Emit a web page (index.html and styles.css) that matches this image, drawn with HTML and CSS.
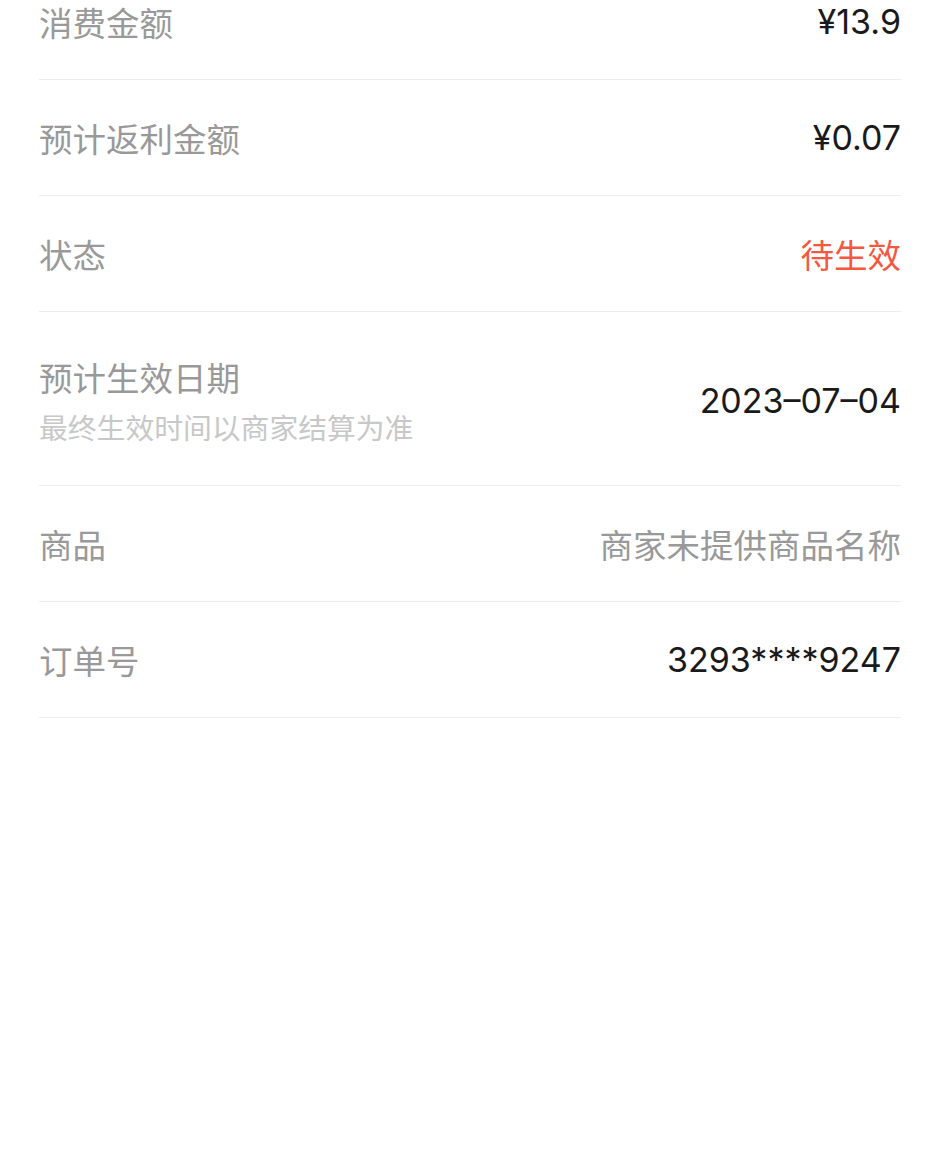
FILE: index.html
```html
<!DOCTYPE html>
<html lang="zh-CN">
<head>
    <meta charset="UTF-8">
    <title>订单详情</title>
    <link rel="stylesheet" href="styles.css">
</head>
<body>
    <div class="detail-list">
        <div class="row">
            <div class="label">消费金额</div>
            <div class="value num">¥13.9</div>
        </div>
        <div class="row">
            <div class="label">预计返利金额</div>
            <div class="value num">¥0.07</div>
        </div>
        <div class="row">
            <div class="label">状态</div>
            <div class="value status">待生效</div>
        </div>
        <div class="row row-tall">
            <div class="label-group">
                <div class="label">预计生效日期</div>
                <div class="sub">最终生效时间以商家结算为准</div>
            </div>
            <div class="value num">2023–07–04</div>
        </div>
        <div class="row">
            <div class="label">商品</div>
            <div class="value muted">商家未提供商品名称</div>
        </div>
        <div class="row">
            <div class="label">订单号</div>
            <div class="value num">3293****9247</div>
        </div>
    </div>
</body>
</html>
```

FILE: styles.css
```css
body {
    margin: 0;
    background: #fff;
    font-family: Inter, "Noto Sans CJK SC", sans-serif;
}
.detail-list {
    margin: -36px 39px 0 39px;
}
.row {
    display: flex;
    justify-content: space-between;
    align-items: center;
    height: 116px;
    border-bottom: 1px solid #ededed;
    box-sizing: border-box;
}
.row-tall {
    height: 174px;
    padding: 43px 0 38px 0;
}
.label {
    font-family: "Noto Sans CJK SC", sans-serif;
    font-size: 33.5px;
    line-height: 44px;
    color: #999;
}
.sub {
    font-family: "Noto Sans CJK SC", sans-serif;
    font-size: 28.8px;
    line-height: 40px;
    margin-top: 8px;
    color: #c8c8c8;
}
.value {
    font-size: 33.5px;
    line-height: 44px;
    color: #1a1a1a;
    text-align: right;
}
.num {
    font-family: Inter, sans-serif;
    font-size: 34px;
}
.status {
    font-family: "Noto Sans CJK SC", sans-serif;
    color: #f5573f;
}
.muted {
    font-family: "Noto Sans CJK SC", sans-serif;
    color: #999;
}
```
